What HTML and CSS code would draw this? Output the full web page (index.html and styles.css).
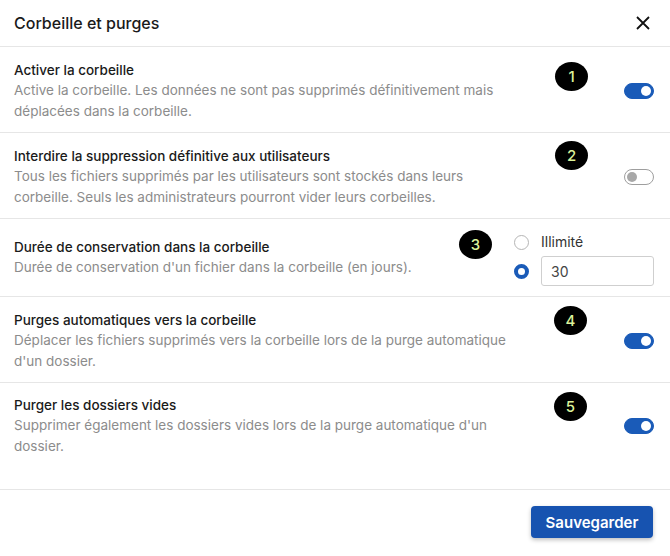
FILE: index.html
```html
<!DOCTYPE html>
<html lang="fr">
<head>
    <meta charset="UTF-8">
    <title>Corbeille et purges</title>
    <link rel="stylesheet" href="styles.css">
</head>
<body>
<div class="dialog">
    <div class="head">
        <span class="head-title">Corbeille et purges</span>
        <svg class="close" width="16" height="16" viewBox="0 0 16 16">
            <path d="M2 2L14 14M14 2L2 14" stroke="#111" stroke-width="1.8" fill="none"/>
        </svg>
    </div>

    <div class="row">
        <div class="text">
            <div class="label">Activer la corbeille</div>
            <div class="desc">Active la corbeille. Les données ne sont pas supprimés définitivement mais déplacées dans la corbeille.</div>
        </div>
        <span class="toggle on"></span>
        <span class="badge b1">1</span>
    </div>

    <div class="row">
        <div class="text">
            <div class="label">Interdire la suppression définitive aux utilisateurs</div>
            <div class="desc">Tous les fichiers supprimés par les utilisateurs sont stockés dans leurs corbeille. Seuls les administrateurs pourront vider leurs corbeilles.</div>
        </div>
        <span class="toggle"></span>
        <span class="badge b2">2</span>
    </div>

    <div class="row row3">
        <div class="text shift">
            <div class="label">Durée de conservation dans la corbeille</div>
            <div class="desc">Durée de conservation d'un fichier dans la corbeille (en jours).</div>
        </div>
        <div class="choices">
            <div class="choice"><span class="radio"></span><span>Illimité</span></div>
            <div class="choice"><span class="radio checked"></span><input class="days" type="text" value="30"></div>
        </div>
        <span class="badge b3">3</span>
    </div>

    <div class="row">
        <div class="text">
            <div class="label">Purges automatiques vers la corbeille</div>
            <div class="desc">Déplacer les fichiers supprimés vers la corbeille lors de la purge automatique d'un dossier.</div>
        </div>
        <span class="toggle on"></span>
        <span class="badge b4">4</span>
    </div>

    <div class="row last">
        <div class="text">
            <div class="label">Purger les dossiers vides</div>
            <div class="desc">Supprimer également les dossiers vides lors de la purge automatique d'un dossier.</div>
        </div>
        <span class="toggle on"></span>
        <span class="badge b5">5</span>
    </div>

    <div class="foot">
        <button class="save">Sauvegarder</button>
    </div>
</div>
</body>
</html>
```

FILE: styles.css
```css
body{
    margin: 0;
    background: #fff;
    font-family: Inter, "Liberation Sans", sans-serif;
    color: #1a1a1a;
}
.dialog{
    width: 670px;
}
.head{
    height: 46px;
    display: flex;
    align-items: center;
    justify-content: space-between;
    padding: 0 19px 0 14px;
    border-bottom: 1px solid #e6e6e6;
}
.head-title{
    font-size: 16px;
    font-weight: 500;
}
.close{
    display: block;
}
.row{
    position: relative;
    display: flex;
    align-items: center;
    justify-content: space-between;
    padding: 13px 16px 10px 14px;
    border-bottom: 1px solid #e6e6e6;
}
.text{
    width: 500px;
}
.text.shift{
    margin-bottom: 4px;
}
.label{
    font-size: 13.5px;
    font-weight: 500;
    line-height: 20px;
}
.desc{
    font-size: 13.5px;
    line-height: 21px;
    color: #8c8c8c;
}
.row3{
    padding-top: 14px;
    padding-bottom: 10px;
}
.last{
    padding-top: 12px;
    padding-bottom: 32px;
}
.toggle{
    position: relative;
    width: 30px;
    height: 16px;
    box-sizing: border-box;
    border-radius: 8px;
    border: 1.5px solid #9e9e9e;
    background: #fff;
    flex: none;
}
.toggle::after{
    content: "";
    position: absolute;
    top: 1.5px;
    left: 2px;
    width: 10px;
    height: 10px;
    border-radius: 50%;
    background: #a8a8a8;
}
.toggle.on{
    border-color: #1a5bb8;
    background: #1a5bb8;
}
.toggle.on::after{
    left: auto;
    right: 2px;
    background: #fff;
}
.choices{
    display: flex;
    flex-direction: column;
    gap: 5px;
}
.choice{
    display: flex;
    align-items: center;
    gap: 12px;
    font-size: 14px;
    line-height: 18px;
    color: #333;
}
.radio{
    width: 15px;
    height: 15px;
    box-sizing: border-box;
    border: 1px solid #b5b5b5;
    border-radius: 50%;
    margin-left: -7px;
}
.radio.checked{
    border: 4.5px solid #1a5bb8;
}
.days{
    width: 113px;
    height: 30px;
    box-sizing: border-box;
    border: 1px solid #cfcfcf;
    border-radius: 3px;
    padding: 0 9px;
    font-family: inherit;
    font-size: 14px;
    color: #444;
}
.badge{
    position: absolute;
    width: 33px;
    height: 29px;
    border-radius: 50%;
    background: #000;
    color: #dcf29a;
    font-size: 15px;
    font-weight: 500;
    text-align: center;
    line-height: 29px;
}
.b1{ left: 555px; top: 15px; }
.b2{ left: 555px; top: 8px; }
.b3{ left: 459px; top: 11px; }
.b4{ left: 554px; top: 9px; }
.b5{ left: 554px; top: 9px; }
.foot{
    display: flex;
    justify-content: flex-end;
    padding: 16px 17px;
}
.save{
    width: 122px;
    height: 32px;
    border: none;
    border-radius: 4px;
    background: #1753b0;
    box-shadow: 0 2px 4px rgba(0,0,0,0.25);
    color: #fff;
    font-family: inherit;
    font-size: 15px;
    font-weight: 600;
}
```
